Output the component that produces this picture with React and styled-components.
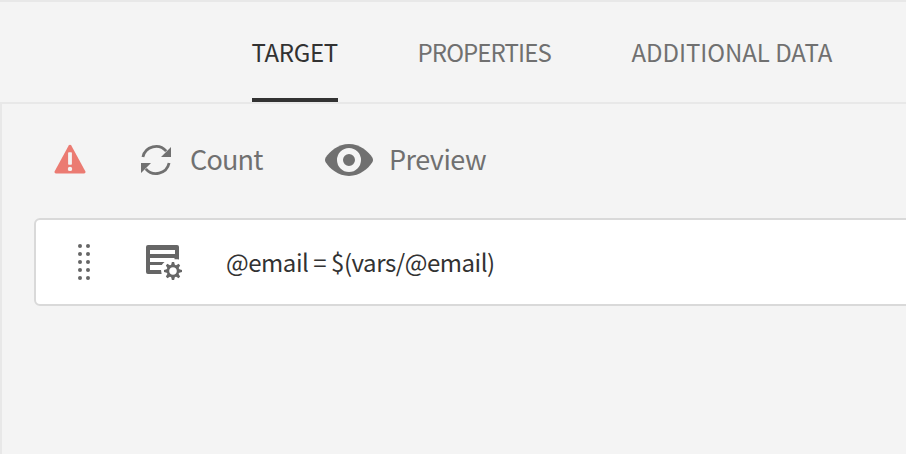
import React from "react";
import styled, { createGlobalStyle } from "styled-components";

const GlobalStyle = createGlobalStyle`
  *, *::before, *::after { box-sizing: border-box; }
  body {
    margin: 0;
    overflow: hidden;
    background: #f4f4f4;
    font-family: "Noto Sans CJK JP", "Noto Sans", sans-serif;
    font-kerning: normal;
    -webkit-font-smoothing: antialiased;
  }
`;

const Page = styled.div`
  display: flex;
  flex-direction: column;
  width: 906px;
  height: 454px;
  overflow: hidden;
  border-top: 2px solid #e8e8e8;
`;

const Tabs = styled.nav`
  display: flex;
  flex: none;
  height: 100px;
  padding-left: 252px;
  gap: 80px;
`;

const Tab = styled.button`
  flex: none;
  width: ${(p) => p.$width}px;
  height: 100px;
  padding: 2px 0 0;
  border: 0;
  border-bottom: 4px solid ${(p) => (p.$active ? "#323232" : "transparent")};
  background: none;
  color: ${(p) => (p.$active ? "#323232" : "#707070")};
  font: 400 24px/96px "Noto Sans CJK JP", sans-serif;
  line-height: 96px;
  letter-spacing: ${(p) => p.$tracking}px;
  text-align: left;
  text-indent: -0.5px;
  white-space: nowrap;
`;

const Panel = styled.main`
  flex: 1;
  border-top: 2px solid #e8e8e8;
  border-left: 2px solid #e8e8e8;
  padding-left: 32px;
`;

const Toolbar = styled.div`
  display: flex;
  align-items: center;
  height: 112px;
  padding-left: 20px;
`;

const Action = styled.button`
  display: flex;
  align-items: center;
  flex: none;
  width: ${(p) => p.$width}px;
  height: 48px;
  margin-left: ${(p) => p.$offset}px;
  padding: 0;
  gap: ${(p) => p.$gap}px;
  border: 0;
  background: none;
  color: #707070;
  font: 400 27px/48px "Noto Sans CJK JP", sans-serif;
  letter-spacing: ${(p) => p.$tracking}px;
  white-space: nowrap;
`;

const Label = styled.span`
  padding-bottom: 2px;
  line-height: 46px;
`;

const Icon = styled.svg`
  display: block;
  flex: none;
`;

const Rule = styled.div`
  display: flex;
  align-items: center;
  width: 900px;
  height: 88px;
  margin-top: 2px;
  padding-left: 42px;
  border: 2px solid #d9d9d9;
  border-radius: 6px;
  background: #fff;
`;

const Handle = styled.div`
  display: grid;
  grid-template-columns: repeat(2, 4px);
  gap: 4px;
  margin-right: 56px;
`;

const Dot = styled.i`
  width: 4px;
  height: 4px;
  border-radius: 50%;
  background: #666;
`;

const Expression = styled.span`
  margin-left: 42px;
  color: #323232;
  font-size: 24px;
  line-height: 48px;
  letter-spacing: -0.46px;
  white-space: nowrap;
`;

const WarningIcon = () => (
  <Icon width="32" height="32" viewBox="0 0 32 32">
    <path d="M14.7 1.6a1.5 1.5 0 0 1 2.6 0l14 25.7a1.5 1.5 0 0 1-1.3 2.2H2a1.5 1.5 0 0 1-1.3-2.2Z" fill="#eb7b72" />
    <rect x="14.1" y="8.2" width="3.8" height="12.6" rx=".8" fill="#f4f4f4" />
    <circle cx="16" cy="24.9" r="2.2" fill="#f4f4f4" />
  </Icon>
);

const RefreshIcon = () => (
  <Icon width="32" height="32" viewBox="0 0 32 32">
    <g fill="none" stroke="#707070" strokeWidth="2.8">
      <path d="M2.9 13A13.4 13.4 0 0 1 26.2 7.2" />
      <path d="M29.1 19A13.4 13.4 0 0 1 5.8 24.8" />
    </g>
    <path d="M31 3v10H21Z M1 29V19h10Z" fill="#707070" />
  </Icon>
);

const EyeIcon = () => (
  <Icon width="48" height="32" viewBox="0 0 48 32">
    <path d="M24 0C13.2 0 4.3 7.8.7 13.5Q-.7 16 .7 18.3C4.3 24.2 13.2 32 24 32S43.7 24.2 47.3 18.3q1.4-2.3 0-4.8C43.7 7.8 34.8 0 24 0Z" fill="#707070" />
    <circle cx="24" cy="16" r="9" fill="none" stroke="#f4f4f4" strokeWidth="6" />
  </Icon>
);

const teeth = [0, 45, 90, 135, 180, 225, 270, 315];

const FormGearIcon = () => (
  <Icon width="38" height="38" viewBox="0 0 38 38">
    <path d="M2 2h29a2 2 0 0 1 2 2v12.6c-1.6-.5-3-.6-4.5-.3V15H4v4h14.5c-1.2 1-2 2-2.7 3H4v5h11l.6 4H2a2 2 0 0 1-2-2V4a2 2 0 0 1 2-2Zm2 5v4h25V7Z" fill="#666" fillRule="evenodd" />
    <g transform="translate(27 28)" fill="#666">
      {teeth.map((angle) => (
        <path key={angle} d="M-2-5.5-1.1-9h2.2L2-5.5Z" transform={`rotate(${angle})`} />
      ))}
      <circle r="5.1" fill="#fff" stroke="#666" strokeWidth="2.6" />
    </g>
  </Icon>
);

export default function App() {
  return (
    <>
      <GlobalStyle />
      <Page>
        <Tabs>
          <Tab $active $width={86} $tracking={-0.3}>TARGET</Tab>
          <Tab $width={134} $tracking={-0.9}>PROPERTIES</Tab>
          <Tab $width={201} $tracking={-0.05}>ADDITIONAL DATA</Tab>
        </Tabs>
        <Panel>
          <Toolbar>
            <WarningIcon />
            <Action $offset={54} $width={123} $gap={18} $tracking={-0.8}>
              <RefreshIcon /><Label>Count</Label>
            </Action>
            <Action $offset={62} $width={162} $gap={16} $tracking={-0.5}>
              <EyeIcon /><Label>Preview</Label>
            </Action>
          </Toolbar>
          <Rule>
            <Handle>
              {Array.from({ length: 10 }, (_, index) => <Dot key={index} />)}
            </Handle>
            <FormGearIcon />
            <Expression>@email = $(vars/@email)</Expression>
          </Rule>
        </Panel>
      </Page>
    </>
  );
}
